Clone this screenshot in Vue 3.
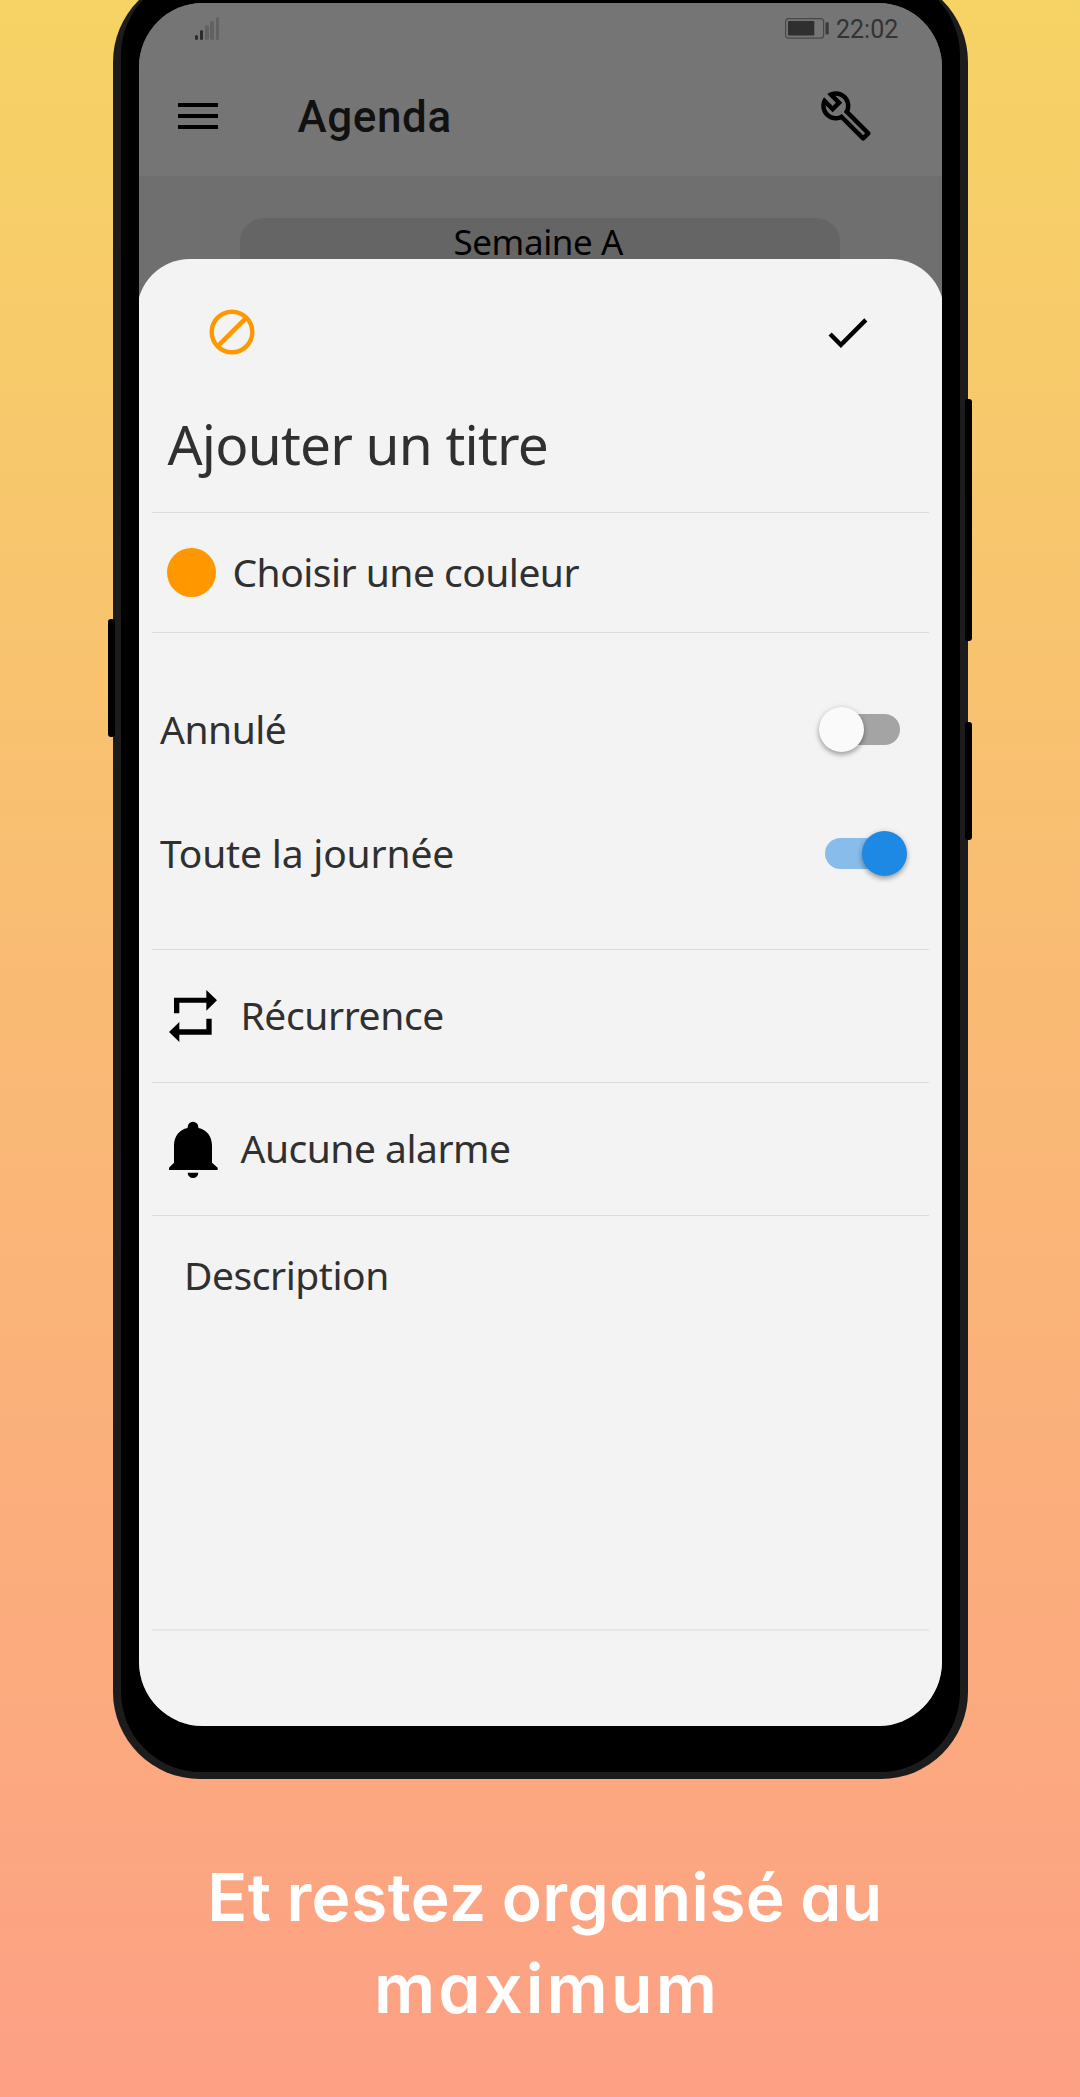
<script setup>
const bars = [5, 10, 15, 19, 23]
const toggles = [
  { label: 'Annulé', on: false, cls: 't-cancel' },
  { label: 'Toute la journée', on: true, cls: 't-day' }
]
</script>

<template>
  <main class="promo">
    <div class="phone">
      <i class="key key-left"></i>
      <i class="key key-volume"></i>
      <i class="key key-power"></i>
      <div class="bezel">
        <div class="screen">
          <div class="topbar">
            <div class="status">
              <div class="signal">
                <i v-for="(h, n) in bars" :key="h" :class="{ weak: n > 1 }" :style="{ height: h + 'px' }"></i>
              </div>
              <div class="status-right">
                <svg class="battery" width="45" height="21" viewBox="0 0 45 21">
                  <rect x="0.6" y="0.6" width="38" height="19.6" rx="3" fill="none" stroke="#484848" stroke-width="1.2" />
                  <rect x="3" y="3" width="26.3" height="14.6" rx="1" fill="#2f2f2f" />
                  <rect x="40.5" y="4.3" width="3.2" height="12.2" rx="1.2" fill="#3a3a3a" />
                </svg>
                <span class="clock">22:02</span>
              </div>
            </div>
            <div class="appbar">
              <div class="menu"><i></i><i></i><i></i></div>
              <h1 class="t-agenda">Agenda</h1>
              <svg class="wrench" width="54" height="54" viewBox="0 0 24 24">
                <path d="M22.61 18.99l-9.08-9.08c.93-2.34.45-5.1-1.44-7C9.79.61 6.21.4 3.66 2.26L7.5 6.11 6.08 7.52 2.25 3.69C.39 6.23.6 9.82 2.9 12.11c1.86 1.86 4.57 2.35 6.89 1.48l9.11 9.11c.39.39 1.02.39 1.41 0l2.3-2.3c.4-.38.4-1.01 0-1.41zm-3 1.6l-9.46-9.46c-.61.45-1.29.72-2 .82-1.36.2-2.79-.21-3.83-1.25C3.37 9.76 2.93 8.5 3 7.26l3.09 3.09 4.24-4.24-3.09-3.09c1.24-.07 2.49.37 3.44 1.31 1.08 1.08 1.49 2.57 1.24 3.96-.12.71-.42 1.37-.88 1.96l9.45 9.45-.88.89z" />
              </svg>
            </div>
          </div>
          <div class="week"><span class="t-week">Semaine A</span></div>

          <section class="sheet">
            <div class="actions">
              <svg width="46" height="46" viewBox="0 0 46 46" fill="none" stroke="#ff9800">
                <circle cx="23" cy="23" r="20.3" stroke-width="4.4" />
                <path d="M8.8 37.2L37.2 8.8" stroke-width="4.6" />
              </svg>
              <svg width="53" height="53" viewBox="0 0 24 24">
                <path d="M9 16.17L4.83 12l-1.42 1.41L9 19 21 7l-1.41-1.41z" />
              </svg>
            </div>
            <div class="row title"><span class="t-title">Ajouter un titre</span></div>
            <div class="row color">
              <i class="dot"></i><span class="t-color">Choisir une couleur</span>
            </div>
            <div class="toggles">
              <div v-for="t in toggles" :key="t.label" class="toggle-row">
                <span :class="t.cls">{{ t.label }}</span>
                <span class="switch" :class="{ on: t.on }"><i></i></span>
              </div>
            </div>
            <div class="row item">
              <svg width="49" height="57" viewBox="117 144 147 171">
                <path d="M132 220V173H229V150L261 181L229 212V188H148V220ZM245 236V284H148V306L117 276L148 246V268H229V236Z" />
              </svg>
              <span class="t-repeat">Récurrence</span>
            </div>
            <div class="row item">
              <svg width="49" height="57" viewBox="117 544 147 171">
                <path d="M117 691V684L132 669V617C132 591 147 570 173 565V562A16 16 0 0 1 205 562V565C231 570 246 591 246 617V669L263 684V691ZM173 699H205A16 16 0 0 1 173 699Z" />
              </svg>
              <span class="t-alarm">Aucune alarme</span>
            </div>
            <div class="row description"><span class="t-desc">Description</span></div>
          </section>
        </div>
      </div>
    </div>
    <p class="caption"><span class="t-cap1">Et restez organisé au</span><br /><span class="t-cap2">maximum</span></p>
  </main>
</template>

<style>
body {
  margin: 0;
}
</style>

<style scoped>
.promo {
  width: 1080px;
  height: 2097px;
  overflow: hidden;
  background: linear-gradient(180deg, #f6d365 0%, #fda085 100%);
  font-family: "Noto Sans", sans-serif;
}
.promo svg {
  display: block;
  flex: none;
}
.phone {
  position: relative;
  box-sizing: border-box;
  width: 854.5px;
  height: 1804px;
  margin: -25px 0 0 113px;
  padding: 0 7.5px 7.5px;
  border-radius: 87px;
  background: #1c1c1c;
}
.key {
  position: absolute;
  width: 7px;
  border-radius: 3px;
  background: #000;
}
.key-left {
  left: -5px;
  top: 644px;
  height: 118px;
}
.key-volume {
  right: -4.5px;
  top: 424px;
  height: 242px;
}
.key-power {
  right: -4.5px;
  top: 747px;
  height: 118px;
}
.bezel {
  box-sizing: border-box;
  height: 1796.5px;
  padding: 27.5px 18px 0;
  border-radius: 80px;
  background: #000;
}
.screen {
  position: relative;
  height: 1723px;
  overflow: hidden;
  border-radius: 64px;
  background: #6f6f6f;
}
.topbar {
  height: 173.5px;
  background: #757575;
}
.status {
  display: flex;
  justify-content: space-between;
  height: 56px;
  padding: 14px 43px 0 56px;
  box-sizing: border-box;
}
.signal {
  display: flex;
  align-items: flex-end;
  gap: 1.8px;
  height: 23px;
}
.signal i {
  width: 3.5px;
  border-radius: 2px;
  background: #2b2b2b;
}
.signal i.weak {
  background: #616161;
}
.status-right {
  display: flex;
  align-items: flex-start;
  gap: 6px;
}
.battery {
  margin-top: 1px;
}
.clock {
  width: 63px;
  font: 25px/25px Roboto, sans-serif;
  color: #333;
  white-space: nowrap;
}
.appbar {
  display: flex;
  align-items: center;
  height: 115px;
  padding: 0 69px 0 39px;
}
.menu {
  display: flex;
  flex-direction: column;
  gap: 6.7px;
  width: 40px;
  margin-right: 80px;
}
.menu i {
  height: 4.3px;
  background: #000;
}
.t-agenda {
  margin: 2px 0 0;
  font: 500 44px/52px Roboto, sans-serif;
  letter-spacing: 0.6px;
  color: #111;
}
.wrench {
  margin-left: auto;
}
.week {
  box-sizing: border-box;
  width: 600px;
  height: 90px;
  margin: 42px auto 0;
  padding-right: 4px;
  border-radius: 24px;
  background: #656565;
  text-align: center;
  font-size: 35px;
  line-height: 48px;
  letter-spacing: -0.4px;
  color: #000;
}
.sheet {
  position: absolute;
  inset: 256.5px -1.5px 0;
  border-radius: 53px 53px 0 0;
  background: #f3f3f3;
  color: #303030;
  font-size: 39px;
  white-space: nowrap;
}
.actions {
  display: flex;
  justify-content: space-between;
  align-items: center;
  height: 117px;
  padding: 14.5px 69.3px 0 72px;
}
.row {
  display: flex;
  align-items: center;
  box-sizing: border-box;
  margin: 0 15px 0 14.5px;
  border-bottom: 1px solid #dcdcdc;
}
.title {
  height: 122.5px;
  padding: 0 0 16px 16px;
  font-size: 55px;
  letter-spacing: -0.8px;
}
.color {
  height: 120px;
  padding-left: 15.7px;
  gap: 16.3px;
}
.t-color {
  letter-spacing: -0.52px;
}
.t-color,
.t-repeat,
.t-alarm {
  margin-top: -3px;
}
.t-cancel,
.t-day {
  margin-top: -1px;
}
.t-cancel {
  letter-spacing: -0.5px;
}
.t-day {
  letter-spacing: -0.18px;
}
.t-repeat {
  letter-spacing: -0.4px;
}
.t-alarm {
  letter-spacing: -0.5px;
}
.t-desc {
  letter-spacing: -0.45px;
}
.dot {
  width: 49px;
  height: 49px;
  border-radius: 50%;
  background: #ff9800;
}
.toggles {
  display: flex;
  flex-direction: column;
  box-sizing: border-box;
  height: 317px;
  margin: 0 15px 0 14.5px;
  padding-top: 34px;
  border-bottom: 1px solid #dcdcdc;
}
.toggle-row {
  display: flex;
  align-items: center;
  justify-content: space-between;
  height: 124px;
  padding: 0 28.7px 0 8.5px;
}
.switch {
  position: relative;
  width: 75px;
  height: 31px;
  border-radius: 16px;
  background: #a4a4a4;
}
.switch i {
  position: absolute;
  left: -6px;
  top: -7px;
  width: 45px;
  height: 45px;
  border-radius: 50%;
  background: #fafafa;
  box-shadow: 0 3px 5px rgba(0, 0, 0, 0.3), 0 0 6px rgba(0, 0, 0, 0.1);
}
.switch.on {
  background: #88bceb;
}
.switch.on i {
  left: 37px;
  background: #1e88e5;
}
.item {
  height: 133px;
  padding-left: 17px;
  gap: 23px;
}
.description {
  align-items: flex-start;
  height: 414.5px;
  padding: 32px 0 0 32.5px;
  border-bottom: 2px solid #e7e7e7;
}
.caption {
  margin: 72px 0 0 10px;
  text-align: center;
  font: 600 66px/92px Inter, sans-serif;
  font-feature-settings: "cv11";
  color: #fff;
}
.t-cap1 {
  letter-spacing: 0.4px;
  word-spacing: -2px;
}
.t-cap2 {
  margin-left: 4px;
  font-size: 68px;
  line-height: 1;
  letter-spacing: 3.1px;
}
</style>
